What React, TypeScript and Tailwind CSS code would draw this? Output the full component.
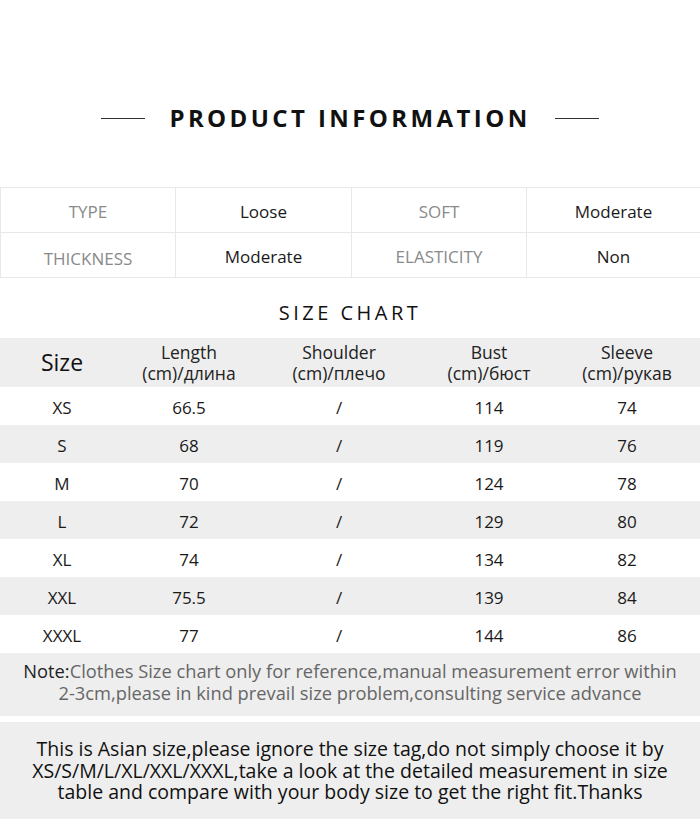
const info = [
  ["TYPE", "Loose", "SOFT", "Moderate"],
  ["THICKNESS", "Moderate", "ELASTICITY", "Non"],
];

const rows = [
  ["XS", "66.5", "/", "114", "74"],
  ["S", "68", "/", "119", "76"],
  ["M", "70", "/", "124", "78"],
  ["L", "72", "/", "129", "80"],
  ["XL", "74", "/", "134", "82"],
  ["XXL", "75.5", "/", "139", "84"],
  ["XXXL", "77", "/", "144", "86"],
];

const cols = "grid grid-cols-[124px_130px_170px_130px_146px]";

export default function App() {
  return (
    <div className="w-[700px] h-[838px] bg-white text-[#111] overflow-hidden font-['Open_Sans',sans-serif]">
      {/* title */}
      <div className="flex justify-center gap-6 pt-[103px] h-[187px] items-start">
        <div className="w-[44px] h-px bg-[#333] mt-[15px]" />
        <h1 className="text-[24px] font-bold tracking-[3.4px] leading-[30px] text-[#111]">PRODUCT INFORMATION</h1>
        <div className="w-[44px] h-px bg-[#333] mt-[15px]" />
      </div>

      {/* info table */}
      <div className="border-t border-[#e8e8e8]">
        {info.map((r, i) => (
          <div key={i} className="grid grid-cols-[175px_176px_175px_174px] h-[45px] border-b border-[#e8e8e8]">
            {r.map((c, j) => (
              <div
                key={j}
                className={`flex items-center justify-center text-[17px] border-l border-[#e8e8e8] ${
                  j % 2 === 0 ? "text-[#8a8a8a]" : "text-[#1a1a1a]"
                } ${i === 1 && j === 0 ? "pt-[8px]" : "pt-[4px]"}`}
              >
                {c}
              </div>
            ))}
          </div>
        ))}
      </div>

      {/* size chart */}
      <div className="h-[60px] flex items-center justify-center pt-[10px]">
        <h2 className="text-[20px] tracking-[3.5px] text-[#111]">SIZE CHART</h2>
      </div>

      <div className={`${cols} bg-[#eeeeee] h-[49px] items-center text-center`}>
        <div className="text-[23px] leading-none text-[#111]">Size</div>
        {["Length\n(cm)/длина", "Shoulder\n(cm)/плечо", "Bust\n(cm)/бюст", "Sleeve\n(cm)/рукав"].map((h) => (
          <div key={h} className="text-[17.5px] leading-[21px] whitespace-pre-line text-[#222]">
            {h}
          </div>
        ))}
      </div>

      {rows.map((r, i) => (
        <div
          key={r[0]}
          className={`${cols} h-[38px] items-center text-center text-[17px] text-[#1a1a1a] pt-[4px] ${
            i % 2 === 1 ? "bg-[#eeeeee]" : "bg-white"
          }`}
        >
          {r.map((c, j) => (
            <div key={j}>{c}</div>
          ))}
        </div>
      ))}

      {/* note */}
      <div className="bg-[#eeeeee] h-[63px] flex flex-col items-center justify-center pb-[6px] text-[18.3px] leading-[22px] text-[#666]">
        <p>
          <span className="text-[#222]">Note:</span>Clothes Size chart only for reference,manual measurement error within
        </p>
        <p>2-3cm,please in kind prevail size problem,consulting service advance</p>
      </div>

      <div className="h-[6px]" />

      <div className="bg-[#eeeeee] h-[97px] flex flex-col items-center justify-center text-[19.5px] leading-[21.5px] text-[#111] text-center">
        <p>This is Asian size,please ignore the size tag,do not simply choose it by</p>
        <p>XS/S/M/L/XL/XXL/XXXL,take a look at the detailed measurement in size</p>
        <p>table and compare with your body size to get the right fit.Thanks</p>
      </div>
    </div>
  );
}
